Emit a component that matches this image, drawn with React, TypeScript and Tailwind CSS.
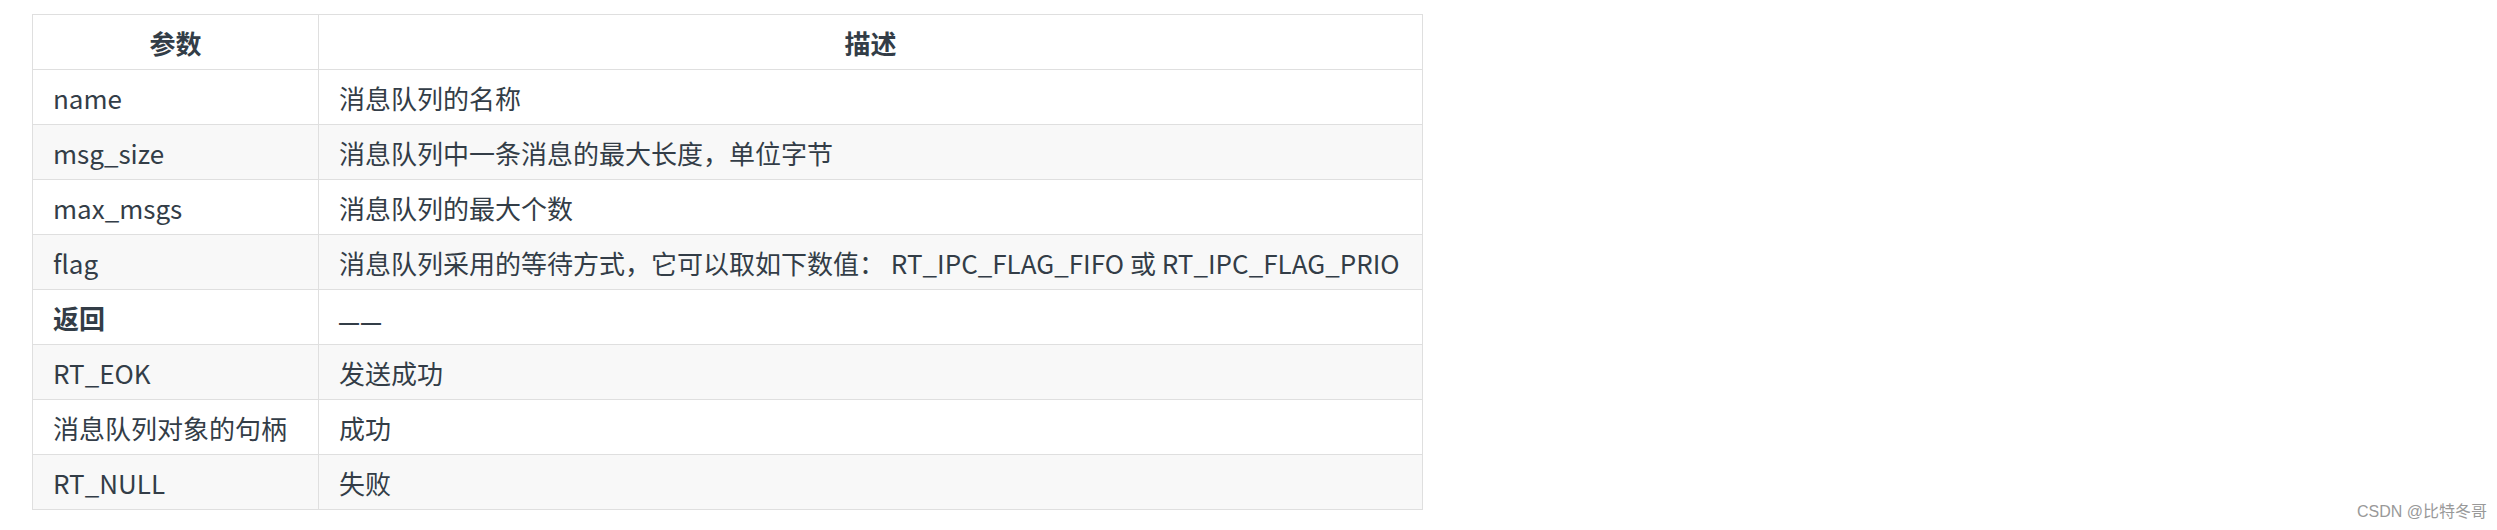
const rows: { param: string; desc: string; bold?: boolean }[] = [
  { param: "name", desc: "消息队列的名称" },
  { param: "msg_size", desc: "消息队列中一条消息的最大长度，单位字节" },
  { param: "max_msgs", desc: "消息队列的最大个数" },
  {
    param: "flag",
    desc: "消息队列采用的等待方式，它可以取如下数值： RT_IPC_FLAG_FIFO 或 RT_IPC_FLAG_PRIO",
  },
  { param: "返回", desc: "——", bold: true },
  { param: "RT_EOK", desc: "发送成功" },
  { param: "消息队列对象的句柄", desc: "成功" },
  { param: "RT_NULL", desc: "失败" },
];

export default function App() {
  return (
    <div className="relative h-[530px] w-full bg-white pl-[32px] pt-[14px] font-['Noto_Sans_CJK_SC',sans-serif] text-[26px] text-[#333d47]">
      <table className="w-[1391px] border-collapse">
        <thead>
          <tr className="h-[55px]">
            <th className="w-[286px] border border-[#dfdfdf] px-[20px] text-center font-bold">参数</th>
            <th className="border border-[#dfdfdf] px-[20px] text-center font-bold">描述</th>
          </tr>
        </thead>
        <tbody>
          {rows.map((row, i) => (
            <tr key={row.param} className={`h-[55px] ${i % 2 === 1 ? "bg-[#f8f8f8]" : "bg-white"}`}>
              <td className={`border border-[#dfdfdf] px-[20px] whitespace-nowrap ${row.bold ? "font-bold" : ""}`}>
                {row.param}
              </td>
              <td className="border border-[#dfdfdf] px-[20px] whitespace-nowrap">
                {row.desc === "——" ? (
                  <span className="font-['Liberation_Sans',sans-serif] text-[20px] font-bold tracking-[2px]">——</span>
                ) : (
                  row.desc
                )}
              </td>
            </tr>
          ))}
        </tbody>
      </table>
      <span className="absolute right-[10px] bottom-[6px] font-['Liberation_Sans','Noto_Sans_CJK_SC',sans-serif] text-[16px] text-[#999999]">
        CSDN @比特冬哥
      </span>
    </div>
  );
}
